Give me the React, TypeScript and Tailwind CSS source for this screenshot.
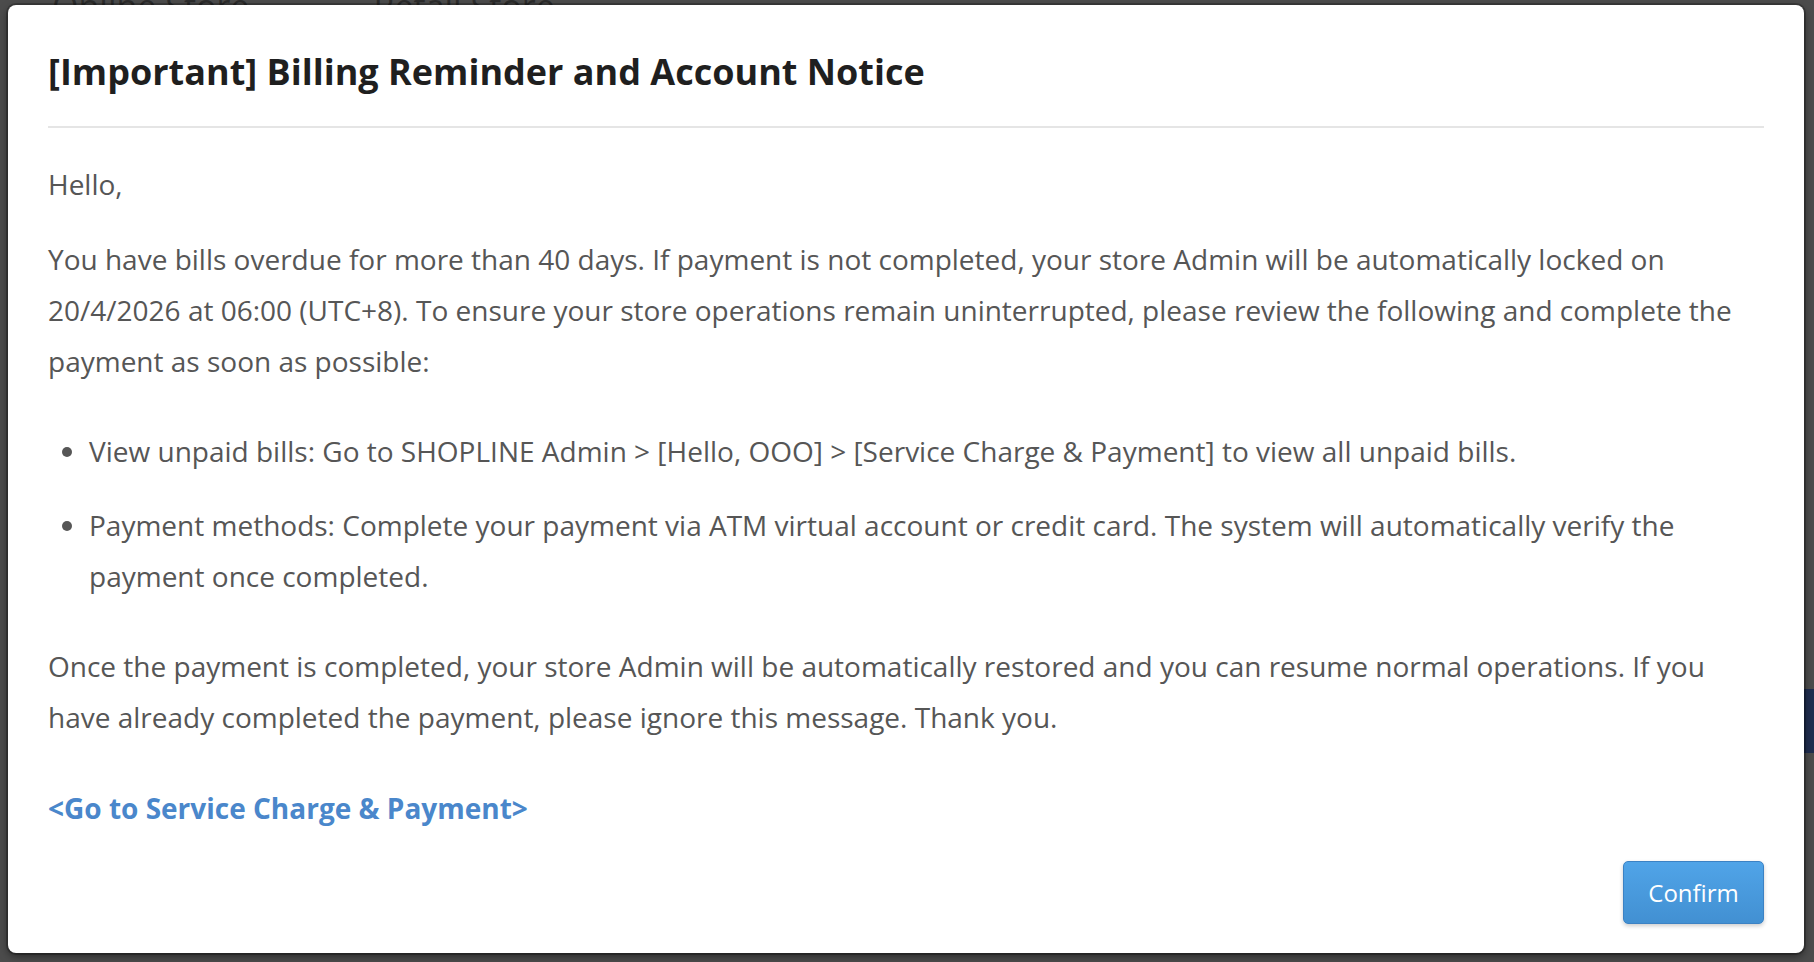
import React from 'react';

const font = "font-['Open_Sans','Liberation_Sans',sans-serif]";

function BackgroundPage() {
  return (
    <div className="flex h-full flex-col">
      <div className="flex h-[12px] items-end gap-[124px] overflow-hidden pl-[52px] text-[34px] leading-none text-[#2c2c2c]">
        <span className="translate-y-[11px]">Online Store</span>
        <span className="translate-y-[11px]">Retail Store</span>
      </div>
      <div className="mt-[677px] ml-auto h-[64px] w-[10px] bg-[#1f2d4f]" />
    </div>
  );
}

function NoticeModal() {
  return (
    <div className="flex h-[948px] flex-col rounded-[8px] bg-white shadow-[0_0_0_2px_rgba(0,0,0,0.22),0_3px_9px_rgba(0,0,0,0.5)]">
      <div className="mx-[40px] border-b-2 border-[#e5e5e5] pt-[43px] pb-[30px]">
        <h2 className="text-[36px] leading-[48px] font-bold text-[#1f1f1f]">
          [Important] Billing Reminder and Account Notice
        </h2>
      </div>

      <div className="flex flex-1 flex-col px-[40px] pt-[31px] pb-[29px] text-[28px] leading-[51px] text-[#565656]">
        <p>Hello,</p>
        <p className="mt-[24px]">
          You have bills overdue for more than 40 days. If payment is not completed, your store Admin will be
          automatically locked on 20/4/2026 at 06:00 (UTC+8). To ensure your store operations remain uninterrupted,
          please review the following and complete the payment as soon as possible:
        </p>

        <ul className="mt-[39px] list-disc pl-[41px] marker:text-[#565656]">
          <li>
            View unpaid bills: Go to SHOPLINE Admin &gt; [Hello, OOO] &gt; [Service Charge &amp; Payment] to view all
            unpaid bills.
          </li>
          <li className="mt-[23px]">
            Payment methods: Complete your payment via ATM virtual account or credit card. The system will automatically
            verify the payment once completed.
          </li>
        </ul>

        <p className="mt-[39px]">
          Once the payment is completed, your store Admin will be automatically restored and you can resume normal
          operations. If you have already completed the payment, please ignore this message. Thank you.
        </p>

        <a href="#" className="mt-[40px] self-start font-bold text-[#4a87cb]">
          &lt;Go to Service Charge &amp; Payment&gt;
        </a>

        <div className="mt-auto flex justify-end">
          <button className="h-[63px] w-[141px] rounded-[5px] border border-[#3c82c4] bg-gradient-to-b from-[#50a4e8] to-[#4290d2] text-[24px] text-white shadow-[0_2px_4px_rgba(0,0,0,0.2)]">
            Confirm
          </button>
        </div>
      </div>
    </div>
  );
}

export default function App() {
  return (
    <div className={`relative h-[962px] w-full overflow-hidden bg-[#4c4c4c] ${font}`}>
      <BackgroundPage />
      <div className="absolute inset-0 pt-[5px] pr-[10px] pl-[8px]">
        <NoticeModal />
      </div>
    </div>
  );
}
